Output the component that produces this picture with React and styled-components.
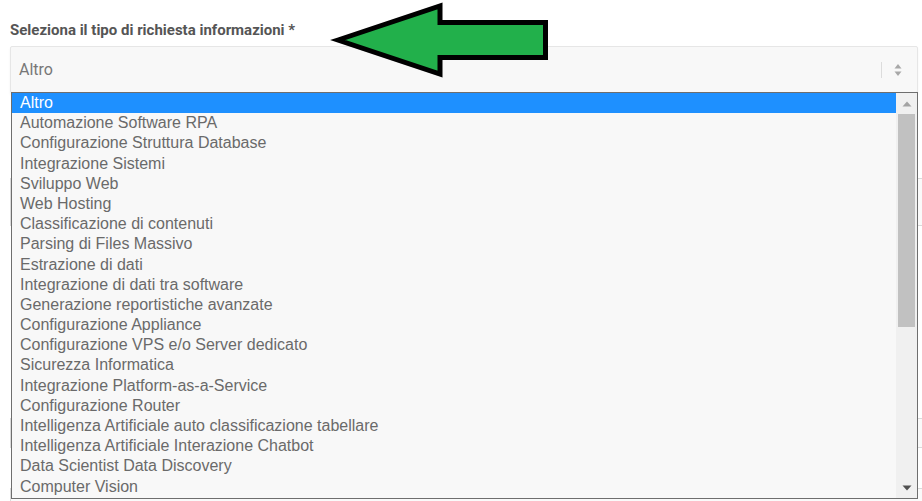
import React from "react";
import styled, { createGlobalStyle } from "styled-components";

const Global = createGlobalStyle`
  html, body { margin: 0; padding: 0; background: #fff; }
  body { font-family: Roboto, "Liberation Sans", Arial, sans-serif; overflow: hidden; }
  * { box-sizing: border-box; }
`;

const Page = styled.div`
  position: relative;
  width: 922px;
  height: 501px;
  overflow: hidden;
  padding: 20px 4px 0 10px;
`;

const Label = styled.div`
  font-family: Roboto, "Liberation Sans", sans-serif;
  font-weight: 700;
  font-size: 15px;
  line-height: 20px;
  color: #555;
  margin-bottom: 6px;
`;

const SelectWrap = styled.div`
  position: relative;
`;

const SelectBox = styled.div`
  height: 47px;
  display: flex;
  align-items: center;
  background: #f8f8f8;
  border: 1px solid #e6e6e6;
  border-radius: 2px;
  padding-left: 8px;
  box-shadow: 0 2px 3px rgba(0, 0, 0, 0.05);
`;

const SelectValue = styled.span`
  flex: 1;
  font-size: 16px;
  color: #777;
`;

const Indicator = styled.div`
  display: flex;
  align-items: center;
  height: 100%;
  padding: 0 15px 0 0;
`;

const Separator = styled.span`
  width: 1px;
  height: 16px;
  background: #dcdcdc;
  margin-right: 12px;
`;

const Fields = styled.div`
  display: flex;
  flex-direction: column;
  margin-right: -10px;
`;

const Field = styled.div`
  height: ${(p) => p.$h}px;
  margin-top: ${(p) => p.$mt}px;
  border: 1px solid #dadada;
  background: #fafafa;
`;

const List = styled.div`
  position: absolute;
  top: 46px;
  left: 1px;
  width: 907px;
  height: 407px;
  display: flex;
  background: #f8f8f8;
  border: 1px solid #6e6e6e;
  z-index: 5;
`;

const Options = styled.div`
  flex: 1;
  overflow: hidden;
`;

const Option = styled.div`
  height: 20.2px;
  line-height: 20.2px;
  padding-left: 8px;
  font-family: "Liberation Sans", Arial, sans-serif;
  font-size: 16px;
  white-space: nowrap;
  color: ${(p) => (p.$selected ? "#fff" : "#6a6a6a")};
  background: ${(p) => (p.$selected ? "#1e90ff" : "transparent")};
`;

const Scrollbar = styled.div`
  width: 21px;
  display: flex;
  flex-direction: column;
  align-items: center;
  background: #f0f0f0;
  padding: 0 2px;
`;

const ScrollBtn = styled.div`
  height: 21px;
  width: 100%;
  display: flex;
  align-items: center;
  justify-content: center;
`;

const Thumb = styled.div`
  width: 17px;
  height: 213px;
  background: #c1c1c1;
`;

const Spacer = styled.div`
  flex: 1;
`;

const Arrow = styled.svg`
  position: absolute;
  left: 0;
  top: 0;
  z-index: 10;
  pointer-events: none;
`;

const options = [
  "Altro",
  "Automazione Software RPA",
  "Configurazione Struttura Database",
  "Integrazione Sistemi",
  "Sviluppo Web",
  "Web Hosting",
  "Classificazione di contenuti",
  "Parsing di Files Massivo",
  "Estrazione di dati",
  "Integrazione di dati tra software",
  "Generazione reportistiche avanzate",
  "Configurazione Appliance",
  "Configurazione VPS e/o Server dedicato",
  "Sicurezza Informatica",
  "Integrazione Platform-as-a-Service",
  "Configurazione Router",
  "Intelligenza Artificiale auto classificazione tabellare",
  "Intelligenza Artificiale Interazione Chatbot",
  "Data Scientist Data Discovery",
  "Computer Vision",
];

export default function App() {
  return (
    <>
      <Global />
      <Page>
        <Label>Seleziona il tipo di richiesta informazioni *</Label>
        <SelectWrap>
          <SelectBox>
            <SelectValue>Altro</SelectValue>
            <Indicator>
              <Separator />
              <svg width="8" height="14" viewBox="0 0 8 14">
                <path d="M4 1 L7.5 5.5 L0.5 5.5 Z" fill="#a8a8a8" />
                <path d="M4 13 L7.5 8.5 L0.5 8.5 Z" fill="#a8a8a8" />
              </svg>
            </Indicator>
          </SelectBox>
          <Fields>
            <Field $mt={85} $h={48} />
            <Field $mt={192} $h={30} />
            <Field $mt={40} $h={30} />
          </Fields>
          <List>
            <Options>
              {options.map((o, i) => (
                <Option key={o} $selected={i === 0}>
                  {o}
                </Option>
              ))}
            </Options>
            <Scrollbar>
              <ScrollBtn>
                <svg width="10" height="6" viewBox="0 0 10 6">
                  <path d="M5 0.5 L9.5 5.5 L0.5 5.5 Z" fill="#a3a3a3" />
                </svg>
              </ScrollBtn>
              <Thumb />
              <Spacer />
              <ScrollBtn>
                <svg width="10" height="6" viewBox="0 0 10 6">
                  <path d="M5 5.5 L9.5 0.5 L0.5 0.5 Z" fill="#505050" />
                </svg>
              </ScrollBtn>
            </Scrollbar>
          </List>
        </SelectWrap>
        <Arrow width="560" height="82" viewBox="0 0 560 82">
          <path
            d="M338 40 L440 6 L440 22.5 L545.5 22.5 L545.5 57.5 L440 57.5 L440 74 Z"
            fill="#22b04b"
            stroke="#000"
            strokeWidth="5"
            strokeLinejoin="miter"
          />
        </Arrow>
      </Page>
    </>
  );
}
